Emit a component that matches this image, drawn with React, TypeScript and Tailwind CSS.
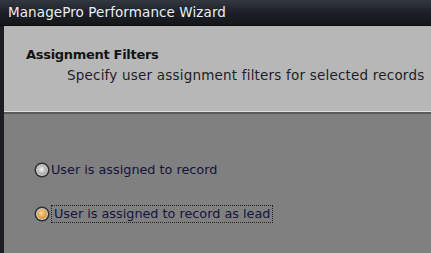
import React from "react";

function Radio({ checked }: { checked?: boolean }) {
  return (
    <svg width="16" height="16" viewBox="0 0 16 16" className="shrink-0">
      <defs>
        <radialGradient id="rw" cx="0.45" cy="0.45" r="0.6">
          <stop offset="0" stopColor="#f4f4f4" />
          <stop offset="1" stopColor="#9a9a9a" />
        </radialGradient>
        <radialGradient id="ro" cx="0.45" cy="0.4" r="0.6">
          <stop offset="0" stopColor="#ffd890" />
          <stop offset="1" stopColor="#d8902c" />
        </radialGradient>
      </defs>
      <circle cx="8" cy="8" r="7.5" fill="#2e2e2e" />
      <circle cx="8" cy="8" r="6" fill="#cfcfcf" />
      <circle cx="8" cy="8" r="4.8" fill={checked ? "url(#ro)" : "url(#rw)"} />
    </svg>
  );
}

export default function App() {
  return (
    <div
      className="flex h-[253px] w-[431px] flex-col overflow-hidden bg-[#808080]"
      style={{ fontFamily: "'DejaVu Sans', Verdana, sans-serif" }}
    >
      {/* Title bar */}
      <div className="flex h-[26px] shrink-0 items-center border-b border-[#0c0d10] bg-gradient-to-b from-[#343842] via-[#1d2026] to-[#14161a] pl-2">
        <span className="text-[13.5px] tracking-[0.1px] text-[#e6eef6]">ManagePro Performance Wizard</span>
      </div>

      <div className="flex flex-1">
        <div className="w-[4px] shrink-0 bg-[#1c1d20]" />
        <div className="flex flex-1 flex-col">
          {/* Header */}
          <div className="h-[86px] shrink-0 border-b border-[#e0e0e0] bg-[#b7b7b7] pl-[22px] pt-[21px]">
            <div className="text-[13px] leading-[16px] font-bold tracking-[-0.3px] text-[#141414]">Assignment Filters</div>
            <div className="mt-[4px] pl-[41px] text-[13.5px] leading-[16px] tracking-[0.2px] text-[#1e1e2a]">
              Specify user assignment filters for selected records
            </div>
          </div>
          <div className="h-[2px] bg-[#5a5a5a]" />

          {/* Body */}
          <div className="flex flex-col gap-[26px] pl-[30px] pt-[47px] text-[12.8px] text-[#14143c]">
            <label className="flex items-center gap-[1px]">
              <Radio />
              <span className="leading-[18px]">User is assigned to record</span>
            </label>
            <label className="flex items-center gap-[1px]">
              <Radio checked />
              <span className="border border-dotted border-[#222] px-[2px] leading-[16px]">
                User is assigned to record as lead
              </span>
            </label>
          </div>
        </div>
      </div>
    </div>
  );
}
